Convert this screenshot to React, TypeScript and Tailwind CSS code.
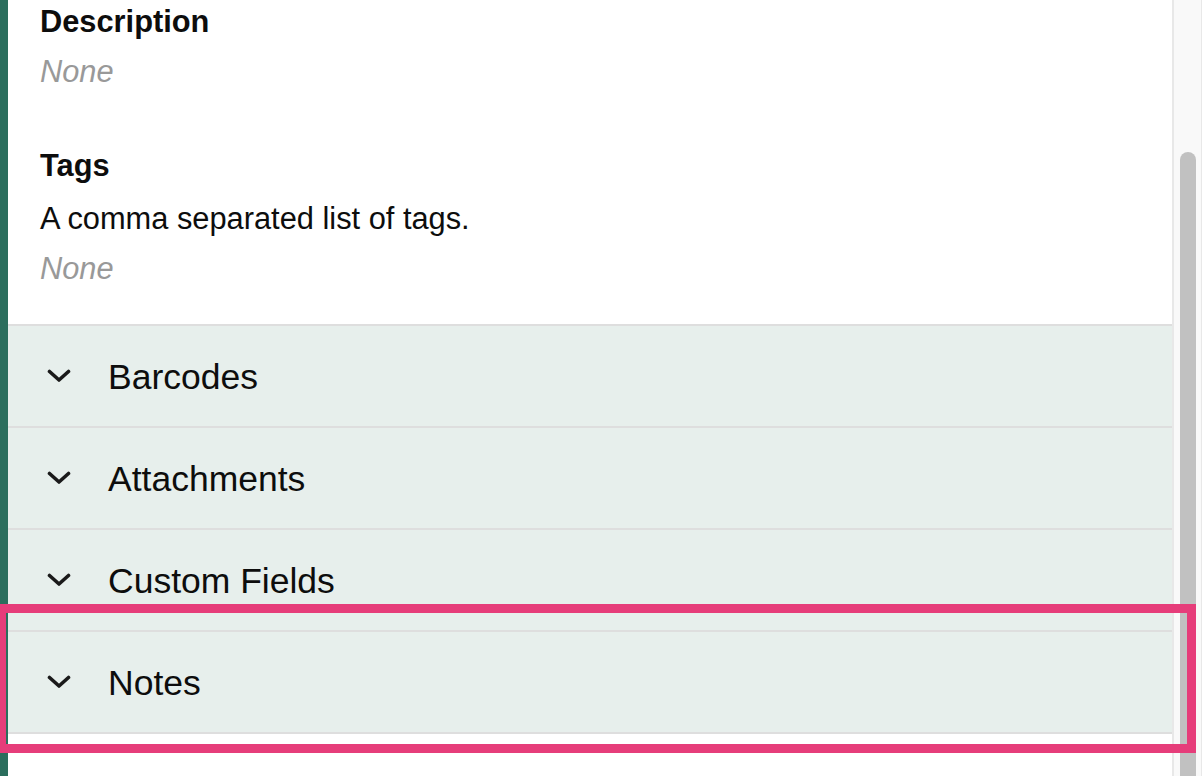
const sections = ["Barcodes", "Attachments", "Custom Fields", "Notes"];

const Chevron = () => (
  <svg width="24" height="14" viewBox="0 0 24 14" fill="none" className="shrink-0">
    <polyline
      points="2.5,2.5 12,11 21.5,2.5"
      stroke="#1a1a1a"
      strokeWidth="3.6"
      strokeLinecap="round"
      strokeLinejoin="round"
    />
  </svg>
);

const App = () => {
  return (
    <div
      className="relative flex h-[776px] w-full overflow-hidden bg-white"
      style={{ fontFamily: '"Liberation Sans", Arial, sans-serif' }}
    >
      <div className="w-[8px] shrink-0 bg-[#2b6e5d]" />

      <div className="flex flex-1 flex-col">
        <div className="pl-[32px] pt-[1px] pb-[34px] text-[30.8px]">
          <div className="h-[42px] leading-[42px] font-bold text-[#0d0d0d]">Description</div>
          <div className="mt-[8px] h-[42px] leading-[42px] italic text-[#999]">None</div>
          <div className="mt-[52px] h-[42px] leading-[42px] font-bold text-[#0d0d0d]">Tags</div>
          <div className="mt-[11px] h-[42px] leading-[42px] text-[#0d0d0d]">
            A comma separated list of tags.
          </div>
          <div className="mt-[8px] h-[42px] leading-[42px] italic text-[#999]">None</div>
        </div>

        <div className="border-b-2 border-[#dedede]">
          {sections.map((name) => (
            <div
              key={name}
              className="flex h-[102px] items-center border-t-2 border-[#dedede] bg-[#e7efec] pl-[39px]"
            >
              <Chevron />
              <span className="ml-[37px] pt-[3px] text-[35.5px] text-[#0d0d0d]">{name}</span>
            </div>
          ))}
        </div>
      </div>

      <div className="flex w-[30px] shrink-0 border-l-2 border-r border-[#e8e8e8] bg-[#f9f9f9] pl-[6px]">
        <div className="mt-[152px] w-[16px] rounded-t-full bg-[#c1c1c1]" />
      </div>

      <div className="absolute left-[-3px] top-[604px] h-[149px] w-[1199px] border-[9px] border-[#e63d7a]" />
    </div>
  );
};

export default App;
